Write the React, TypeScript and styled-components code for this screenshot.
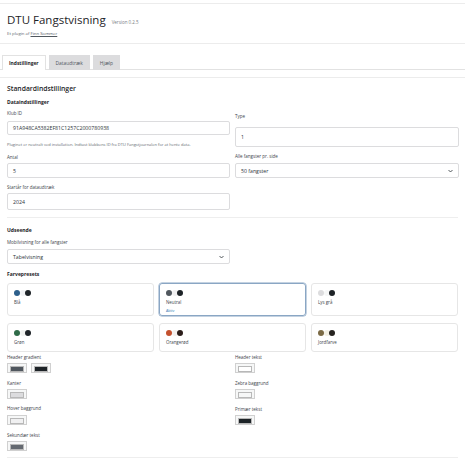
import React from "react";
import styled, { createGlobalStyle } from "styled-components";

const GlobalStyle = createGlobalStyle`
  html, body {
    margin: 0;
    padding: 0;
    background: #ffffff;
    font-family: "Open Sans", "Noto Sans", "Liberation Sans", sans-serif;
    color: #1d2327;
  }
  * { box-sizing: border-box; }
`;

const Page = styled.div`
  width: 465px;
  padding-top: 3px;
`;

const HeaderCard = styled.div`
  border-top: 1px solid #ececec;
  border-bottom: 1px solid #ececec;
  height: 41px;
  padding: 9px 7px 0;
`;

const TitleRow = styled.div`
  display: flex;
  align-items: baseline;
  gap: 6px;
`;

const Title = styled.h1`
  margin: 0;
  font-size: 11.5px;
  font-weight: 400;
  line-height: 14px;
`;

const Version = styled.span`
  font-size: 4.5px;
  color: #787c82;
`;

const Byline = styled.div`
  margin-top: 3px;
  font-size: 4.3px;
  color: #646970;

  a {
    color: #50575e;
    text-decoration: underline;
  }
`;

const TabBar = styled.div`
  display: flex;
  gap: 3px;
  margin-top: 11px;
  padding-left: 2px;
  border-bottom: 1px solid #e2e2e2;
  height: 15px;
`;

const Tab = styled.div<{ $active?: boolean }>`
  padding: 0 6px;
  height: 15px;
  display: flex;
  align-items: center;
  font-size: 4.9px;
  font-weight: ${(p) => (p.$active ? 700 : 500)};
  color: ${(p) => (p.$active ? "#1d2327" : "#50575e")};
  background: ${(p) => (p.$active ? "#ffffff" : "#dcdcde")};
  border: 1px solid ${(p) => (p.$active ? "#e2e2e2" : "#dcdcde")};
  border-bottom: none;
  margin-bottom: -1px;
`;

const ContentCard = styled.div`
  margin-top: 7px;
  border-top: 1px solid #ececec;
  padding: 6px 7px 0;
`;

const SectionTitle = styled.h2`
  margin: 0;
  font-size: 6.8px;
  font-weight: 600;
  line-height: 10px;
`;

const SubTitle = styled.h3<{ $top?: number }>`
  margin: ${(p) => p.$top ?? 3}px 0 0;
  font-size: 5px;
  font-weight: 700;
  line-height: 8px;
`;

const TwoCol = styled.div`
  display: grid;
  grid-template-columns: 223px 224px;
  column-gap: 5px;
`;

const Column = styled.div`
  display: flex;
  flex-direction: column;
`;

const Label = styled.div<{ $top?: number }>`
  margin-top: ${(p) => p.$top ?? 0}px;
  font-size: 4.5px;
  color: #3c434a;
  line-height: 7px;
`;

const Field = styled.div<{ $h?: number; $top?: number }>`
  margin-top: ${(p) => p.$top ?? 3}px;
  height: ${(p) => p.$h ?? 15}px;
  border: 1px solid #dcdcde;
  border-radius: 2px;
  display: flex;
  align-items: center;
  justify-content: space-between;
  padding: 0 5px;
  font-size: 5.2px;
  color: #2c3338;
  background: #fff;
`;

const Help = styled.div`
  margin-top: 7px;
  font-size: 4px;
  line-height: 5px;
  color: #646970;
`;

const Divider = styled.div<{ $top?: number }>`
  margin-top: ${(p) => p.$top ?? 7}px;
  border-top: 1px solid #eeeeee;
`;

const PresetGrid = styled.div`
  margin-top: 5px;
  display: grid;
  grid-template-columns: repeat(3, 1fr);
  column-gap: 5px;
  row-gap: 7px;
`;

const PresetCard = styled.div<{ $active?: boolean; $h: number }>`
  height: ${(p) => p.$h}px;
  border: 1px solid ${(p) => (p.$active ? "#8aa6c4" : "#e6e6e6")};
  box-shadow: ${(p) => (p.$active ? "0 0 0 0.5px #8aa6c4" : "none")};
  border-radius: 3px;
  padding: 6px 6px 0;
`;

const Dots = styled.div`
  display: flex;
`;

const Dot = styled.span<{ $c: string }>`
  width: 6px;
  height: 6px;
  border-radius: 50%;
  background: ${(p) => p.$c};
  margin-right: -0.5px;
`;

const PresetName = styled.div`
  margin-top: 3px;
  font-size: 4.4px;
  color: #3c434a;
`;

const ActiveTag = styled.div`
  margin-top: 3px;
  font-size: 3.7px;
  color: #2271b1;
`;

const SwatchRow = styled.div`
  display: flex;
  gap: 4px;
  margin-top: 2.5px;
`;

const Swatch = styled.div<{ $c: string }>`
  width: 20px;
  height: 10px;
  border: 1px solid #d0d0d0;
  background: #f6f7f7;
  padding: 2px;

  &::after {
    content: "";
    display: block;
    height: 100%;
    background: ${(p) => p.$c};
    border: 0.5px solid #b8b8b8;
  }
`;

const Chevron = () => (
  <svg width="5" height="4" viewBox="0 0 10 6">
    <path d="M1 1l4 4 4-4" fill="none" stroke="#2c3338" strokeWidth="1.6" />
  </svg>
);

const presets = [
  { name: "Blå", c: ["#2d5f8b", "#f0f2f4", "#1d2327"] },
  { name: "Neutral", c: ["#50575e", "#f0f0f1", "#1d2327"], active: true },
  { name: "Lys grå", c: ["#dcdcde", "#f6f7f7", "#1d2327"] },
  { name: "Grøn", c: ["#2f6b48", "#f0f2f0", "#1d2327"] },
  { name: "Orangerød", c: ["#c4512e", "#f4f0ee", "#2b1d1a"] },
  { name: "Jordfarve", c: ["#7b6a45", "#f3f0e4", "#26231f"] },
];

const App: React.FC = () => {
  return (
    <Page>
      <GlobalStyle />
      <HeaderCard>
        <TitleRow>
          <Title>DTU Fangstvisning</Title>
          <Version>Version 0.2.5</Version>
        </TitleRow>
        <Byline>
          Et plugin af <a>Finn Sommer</a>
        </Byline>
      </HeaderCard>

      <TabBar>
        <Tab $active>Indstillinger</Tab>
        <Tab>Dataudtræk</Tab>
        <Tab>Hjælp</Tab>
      </TabBar>

      <ContentCard>
        <SectionTitle>Standardindstillinger</SectionTitle>
        <SubTitle $top={4}>Dataindstillinger</SubTitle>
        <TwoCol>
          <Column>
            <Label $top={3.5}>Klub ID</Label>
            <Field $h={14} $top={4.5}>91A948CA5382EF81C1257C2000780938</Field>
            <Help>Pluginet er neutralt ved installation. Indtast klubbens ID fra DTU Fangstjournalen for at hente data.</Help>
            <Label $top={6.5}>Antal</Label>
            <Field $top={2.5}>5</Field>
            <Label $top={5.5}>Startår for dataudtræk</Label>
            <Field $h={17} $top={2.5}>2024</Field>
          </Column>
          <Column>
            <Label $top={6.5}>Type</Label>
            <Field $h={20} $top={7.5}>1</Field>
            <Label $top={5.5}>Alle fangster pr. side</Label>
            <Field $h={15} $top={3.5}>
              50 fangster
              <Chevron />
            </Field>
          </Column>
        </TwoCol>

        <Divider $top={7} />

        <SubTitle $top={8}>Udseende</SubTitle>
        <TwoCol>
          <Column>
            <Label $top={4.5}>Mobilvisning for alle fangster</Label>
            <Field $h={15} $top={3.5}>
              Tabelvisning
              <Chevron />
            </Field>
          </Column>
        </TwoCol>

        <SubTitle $top={5.5}>Farvepresets</SubTitle>
        <PresetGrid>
          {presets.map((p, i) => (
            <PresetCard key={p.name} $active={p.active} $h={i < 3 ? 33 : 29}>
              <Dots>
                {p.c.map((c) => (
                  <Dot key={c} $c={c} />
                ))}
              </Dots>
              <PresetName>{p.name}</PresetName>
              {p.active && <ActiveTag>Aktiv</ActiveTag>}
            </PresetCard>
          ))}
        </PresetGrid>

        <TwoCol>
          <Column>
            <Label $top={2}>Header gradient</Label>
            <SwatchRow>
              <Swatch $c="#50575e" />
              <Swatch $c="#1d2327" />
            </SwatchRow>
            <Label $top={6.5}>Kanter</Label>
            <SwatchRow>
              <Swatch $c="#dcdcde" />
            </SwatchRow>
            <Label $top={6}>Hover baggrund</Label>
            <SwatchRow>
              <Swatch $c="#f0f0f1" />
            </SwatchRow>
            <Label $top={7}>Sekundær tekst</Label>
            <SwatchRow>
              <Swatch $c="#646970" />
            </SwatchRow>
          </Column>
          <Column>
            <Label $top={2}>Header tekst</Label>
            <SwatchRow>
              <Swatch $c="#ffffff" />
            </SwatchRow>
            <Label $top={6.5}>Zebra baggrund</Label>
            <SwatchRow>
              <Swatch $c="#f6f7f7" />
            </SwatchRow>
            <Label $top={6.5}>Primær tekst</Label>
            <SwatchRow>
              <Swatch $c="#1d2327" />
            </SwatchRow>
          </Column>
        </TwoCol>

        <Divider $top={6} />
      </ContentCard>
    </Page>
  );
};

export default App;
